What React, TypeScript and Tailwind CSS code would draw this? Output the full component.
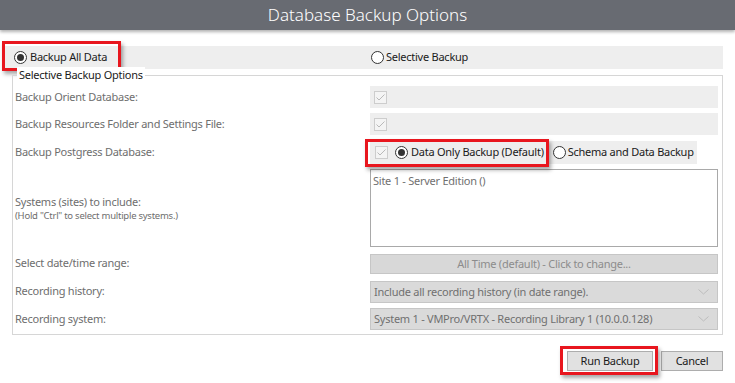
import React from 'react';

const font = { fontFamily: '"Noto Sans", "Open Sans", sans-serif' };

const Radio = ({ checked }: { checked?: boolean }) => (
  <span className="flex h-[13px] w-[13px] shrink-0 items-center justify-center rounded-full border border-[#333] bg-white">
    {checked && <span className="h-[7px] w-[7px] rounded-full bg-[#333]" />}
  </span>
);

const Check = () => (
  <svg width="13" height="13" viewBox="0 0 13 13" className="shrink-0">
    <rect x="0.5" y="0.5" width="12" height="12" fill="#f4f4f4" stroke="#cdcdcd" />
    <path d="M2.5 6.5 L5 9 L10.5 3.5" fill="none" stroke="#b9b9b9" strokeWidth="1" />
  </svg>
);

const Chevron = () => (
  <svg width="11" height="6" viewBox="0 0 11 6" className="shrink-0">
    <path d="M0.5 0.5 L5.5 5 L10.5 0.5" fill="none" stroke="#bcbcbc" strokeWidth="1" />
  </svg>
);

const RedBox = ({ className }: { className: string }) => (
  <div
    className={`pointer-events-none absolute border-[3px] border-[#e8161e] shadow-[2px_3px_4px_rgba(0,0,0,0.35)] ${className}`}
  />
);

const Label = ({ children }: { children: React.ReactNode }) => (
  <div className="flex items-center whitespace-nowrap text-[#6e6e6e]">{children}</div>
);

const Dropdown = ({ text }: { text: string }) => (
  <div className="flex h-[22px] items-center justify-between border border-[#c6c6c6] bg-[#dadada] pl-[3px] pr-[8px] text-[#707070]">
    <span className="whitespace-nowrap">{text}</span>
    <Chevron />
  </div>
);

export default function App() {
  return (
    <div
      className="flex h-[383px] w-[735px] flex-col overflow-hidden bg-white text-[11px] tracking-[-0.25px]"
      style={font}
    >
      <div className="relative z-10 flex h-[30px] shrink-0 items-center justify-center bg-[#686b72] text-[17px] font-light tracking-normal text-white shadow-[0_2px_3px_rgba(0,0,0,0.3)]">
        Database Backup Options
      </div>

      <div className="relative ml-[4px] mr-[12px] mt-[16px] grid h-[23px] grid-cols-[366px_1fr] bg-[#eeeeee] text-[#1a1a1a]">
        <RedBox className="-left-[2px] -top-[5px] h-[30px] w-[119px]" />
        <div className="flex items-center gap-[3px] pl-[10px]">
          <Radio checked />
          <span>Backup All Data</span>
        </div>
        <div className="flex items-center gap-[2px] pl-[1px]">
          <Radio />
          <span>Selective Backup</span>
        </div>
      </div>

      <div className="relative mx-[12px] mt-[6px] h-[260px] border border-[#d6d6d6] pl-[2px] pt-[10px]">
        <span className="absolute -top-[9px] left-[4px] bg-white px-[2px] text-[#1a1a1a]">
          Selective Backup Options
        </span>

        <div className="grid grid-cols-[355px_348px] gap-y-[5px]">
          <Label>Backup Orient Database:</Label>
          <div className="flex h-[22px] items-center bg-[#eeeeee] pl-[4px]">
            <Check />
          </div>

          <Label>Backup Resources Folder and Settings File:</Label>
          <div className="flex h-[22px] items-center bg-[#eeeeee] pl-[4px]">
            <Check />
          </div>

          <Label>Backup Postgress Database:</Label>
          <div className="mt-[1px] flex">
            <div className="relative flex h-[23px] w-[327px] items-center whitespace-nowrap bg-[#eeeeee] pl-[5px] text-[#1a1a1a]">
              <RedBox className="-left-[5px] -top-[2px] h-[28px] w-[184px]" />
              <Check />
              <span className="ml-[7px] flex items-center gap-[3px]">
                <Radio checked />
                <span>Data Only Backup (Default)</span>
              </span>
              <span className="ml-[9px] flex items-center gap-[2px]">
                <Radio />
                <span>Schema and Data Backup</span>
              </span>
            </div>
          </div>

          <div className="flex flex-col justify-center whitespace-nowrap text-[#6e6e6e]">
            <span className="leading-[14px]">Systems (sites) to include:</span>
            <span className="text-[9.5px] leading-[13px]">(Hold "Ctrl" to select multiple systems.)</span>
          </div>
          <div className="h-[78px] border border-[#a9a9a9] bg-white pl-[2px] pt-[3px] leading-[15px] text-[#707070]">
            Site 1 - Server Edition ()
          </div>

          <Label>Select date/time range:</Label>
          <div className="mt-[2px] flex h-[20px] items-center justify-center border border-[#c6c6c6] bg-[#d8d8d8] text-[#8c8c8c]">
            All Time (default) - Click to change...
          </div>

          <Label>Recording history:</Label>
          <div className="mt-[2px]">
            <Dropdown text="Include all recording history (in date range)." />
          </div>

          <Label>Recording system:</Label>
          <Dropdown text="System 1 - VMPro/VRTX - Recording Library 1 (10.0.0.128)" />
        </div>
      </div>

      <div className="mr-[12px] mt-[16px] flex justify-end gap-[8px] text-[#1a1a1a]">
        <div className="relative">
          <RedBox className="-bottom-[4px] -left-[7px] -right-[5px] -top-[5px]" />
          <button className="flex h-[20px] w-[86px] items-center justify-center border border-[#adadad] bg-[#e1e1e1]">
            Run Backup
          </button>
        </div>
        <button className="flex h-[20px] w-[62px] items-center justify-center border border-[#adadad] bg-[#e1e1e1]">
          Cancel
        </button>
      </div>
    </div>
  );
}
